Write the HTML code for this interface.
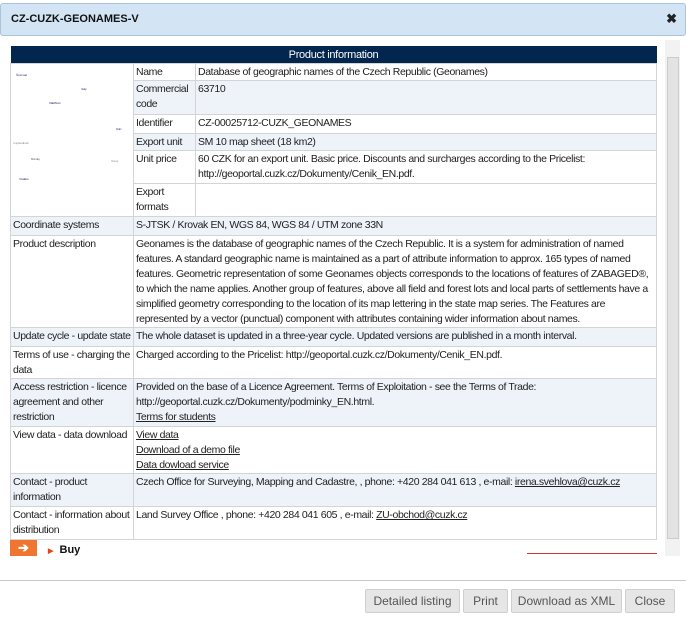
<!DOCTYPE html>
<html><head><style>
body{margin:0;width:686px;height:622px;background:#fff;font-family:"Liberation Sans",Arial,sans-serif;font-size:10.5px;color:#222;position:relative;overflow:hidden}
.hdr{position:absolute;left:0;top:3px;width:684px;height:31px;background:#d3e5f5;border:1px solid #a9c3da;border-radius:3px}
.hdr b{position:absolute;left:10px;top:9px;font-size:11px;color:#111}
.hdr i{position:absolute;right:8px;top:7px;font-style:normal;font-weight:bold;font-size:13px}
table{position:absolute;left:10px;top:46px;width:647px;border-collapse:collapse;table-layout:fixed}
td{border:1px solid #d4d4d4;padding:1px 2px 0 2px;vertical-align:top;line-height:15px;letter-spacing:-0.38px}
th{background:#03264f;color:#fff;font-weight:normal;height:17px;padding:0;font-size:11px;letter-spacing:-0.3px}
tr.b td.c{background:#edf3f9}
a{color:#222;text-decoration:underline}
.sb{position:absolute;left:665px;top:40px;width:15px;height:516px;background:#f2f2f2}
.sb div{position:absolute;left:2px;top:17px;width:10px;height:480px;background:#e3e3e3;border:1px solid #ccc}
.foot{position:absolute;left:0;top:580px;width:686px;border-top:1px solid #c8c8c8}
.btn{position:absolute;top:589px;height:22px;line-height:22px;background:#e6e6e6;border:1px solid #d0d0d0;border-radius:2px;color:#555;font-size:12px;text-align:center}
</style></head><body>
<div class="hdr"><b>CZ-CUZK-GEONAMES-V</b><i>✖</i></div>
<table>
<colgroup><col style="width:123px"><col style="width:62px"><col></colgroup>
<tr><th colspan="3">Product information</th></tr>
<tr><td rowspan="6" style="position:relative"><svg width="115" height="140" style="position:absolute;left:2px;top:6px"><g fill="#448" font-size="3"><text x="3" y="6">Šenov sad</text><text x="68" y="20">Velký</text><text x="36" y="34">Malé Bruzo</text><text x="103" y="60">Dolní</text><text x="0" y="74" fill="#999">U spravedlnosti</text><text x="18" y="90" fill="#777">Bernatky</text><text x="98" y="92" fill="#999">Kroucy</text><text x="6" y="110">Chvalkov</text></g></svg></td><td style="height:15px">Name</td><td>Database of geographic names of the Czech Republic (Geonames)</td></tr>
<tr class="b"><td class="c" style="height:32px">Commercial code</td><td class="c">63710</td></tr>
<tr><td style="height:17px">Identifier</td><td>CZ-00025712-CUZK_GEONAMES</td></tr>
<tr class="b"><td class="c" style="height:15px">Export unit</td><td class="c">SM 10 map sheet (18 km2)</td></tr>
<tr><td style="height:31px">Unit price</td><td>60 CZK for an export unit. Basic price. Discounts and surcharges according to the Pricelist: http://geoportal.cuzk.cz/Dokumenty/Cenik_EN.pdf.</td></tr>
<tr><td style="height:31px">Export formats</td><td></td></tr>
<tr class="b"><td class="c" style="height:17px">Coordinate systems</td><td class="c" colspan="2">S-JTSK / Krovak EN, WGS 84, WGS 84 / UTM zone 33N</td></tr>
<tr><td style="height:88px">Product description</td><td colspan="2">Geonames is the database of geographic names of the Czech Republic. It is a system for administration of named features. A standard geographic name is maintained as a part of attribute information to approx. 165 types of named features. Geometric representation of some Geonames objects corresponds to the locations of features of ZABAGED®, to which the name applies. Another group of features, above all field and forest lots and local parts of settlements have a simplified geometry corresponding to the location of its map lettering in the state map series. The Features are represented by a vector (punctual) component with attributes containing wider information about names.</td></tr>
<tr class="b"><td class="c" style="height:17px">Update cycle - update state</td><td class="c" colspan="2">The whole dataset is updated in a three-year cycle. Updated versions are published in a month interval.</td></tr>
<tr><td style="height:30px">Terms of use - charging the data</td><td colspan="2">Charged according to the Pricelist: http://geoportal.cuzk.cz/Dokumenty/Cenik_EN.pdf.</td></tr>
<tr class="b"><td class="c" style="height:46px">Access restriction - licence agreement and other restriction</td><td class="c" colspan="2">Provided on the base of a Licence Agreement. Terms of Exploitation - see the Terms of Trade: http://geoportal.cuzk.cz/Dokumenty/podminky_EN.html.<br><a>Terms for students</a></td></tr>
<tr><td style="height:45px">View data - data download</td><td colspan="2"><a>View data </a><br><a>Download of a demo file </a><br><a>Data dowload service </a></td></tr>
<tr class="b"><td class="c" style="height:31px">Contact - product information</td><td class="c" colspan="2">Czech Office for Surveying, Mapping and Cadastre, , phone: +420 284 041 613 , e-mail: <a>irena.svehlova@cuzk.cz</a></td></tr>
<tr><td style="height:31px">Contact - information about distribution</td><td colspan="2">Land Survey Office , phone: +420 284 041 605 , e-mail: <a>ZU-obchod@cuzk.cz</a></td></tr>
</table>
<div style="position:absolute;left:10px;top:540px;width:27px;height:16px;background:#ef7530;color:#fff;font-weight:bold;text-align:center;line-height:15px;font-size:13px;overflow:hidden">➔</div>
<div style="position:absolute;left:48px;top:544px;font-size:11px;font-weight:bold;color:#111"><span style="color:#e2461a;font-size:7px">▶</span>&nbsp; Buy</div>
<div style="position:absolute;left:527px;top:553px;width:130px;height:1px;background:#c33"></div>
<div class="sb"><div></div></div>
<div class="foot"></div>
<div class="btn" style="left:365px;width:93px">Detailed listing</div>
<div class="btn" style="left:463px;width:43px">Print</div>
<div class="btn" style="left:511px;width:109px">Download as XML</div>
<div class="btn" style="left:625px;width:48px">Close</div>
</body></html>
